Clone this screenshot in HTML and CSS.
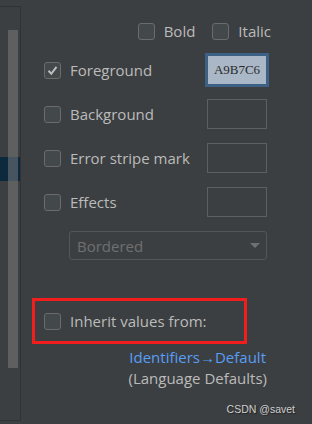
FILE: index.html
```html
<!DOCTYPE html>
<html lang="en">
<head>
  <meta charset="UTF-8" />
  <title>Color Scheme Attributes</title>
  <link rel="stylesheet" href="styles.css">
</head>
<body>
  <div class="tree-panel">
    <div class="tree-selection"></div>
    <div class="scrollbar"></div>
  </div>

  <div class="attributes">
    <div class="font-row">
      <label class="check"><span class="box"></span>Bold</label>
      <label class="check"><span class="box"></span>Italic</label>
    </div>

    <div class="attr-row">
      <label class="check"><span class="box checked"><svg width="13" height="13" viewBox="0 0 13 13"><polyline points="2.5,6.8 5.3,9.8 10.5,2.8" fill="none" stroke="#bdbdbd" stroke-width="2"/></svg></span>Foreground</label>
      <div class="swatch filled">A9B7C6</div>
    </div>
    <div class="attr-row">
      <label class="check"><span class="box"></span>Background</label>
      <div class="swatch"></div>
    </div>
    <div class="attr-row">
      <label class="check"><span class="box"></span>Error stripe mark</label>
      <div class="swatch"></div>
    </div>
    <div class="attr-row">
      <label class="check"><span class="box"></span>Effects</label>
      <div class="swatch"></div>
    </div>

    <div class="effect-select">
      <span>Bordered</span>
      <span class="arrow"></span>
    </div>

    <div class="inherit">
      <label class="check"><span class="box"></span>Inherit values from:</label>
    </div>

    <div class="inherit-link">Identifiers&#8594;Default</div>
    <div class="inherit-note">(Language Defaults)</div>
  </div>

  <div class="watermark">CSDN @savet</div>
</body>
</html>
```

FILE: styles.css
```css
body {
  margin: 0;
  width: 312px;
  height: 424px;
  background-color: #3c3f41;
  color: #bbbbbb;
  font-family: 'Open Sans', 'Noto Sans', sans-serif;
  font-size: 15px;
  display: flex;
  overflow: hidden;
  position: relative;
}
.tree-panel {
  position: relative;
  width: 20px;
  height: 413px;
  margin-top: 6px;
  border-top: 1px solid #323232;
  border-right: 1px solid #323232;
  border-bottom: 1px solid #323232;
  flex-shrink: 0;
}
.tree-selection {
  position: absolute;
  left: 0;
  right: 0;
  top: 150px;
  height: 24px;
  background-color: #0d293e;
}
.scrollbar {
  position: absolute;
  left: 8px;
  width: 10px;
  top: 23px;
  height: 338px;
  background-color: rgba(120, 122, 124, 0.55);
}
.attributes {
  flex: 1;
  padding-left: 23px;
  padding-right: 45px;
  display: flex;
  flex-direction: column;
}
.check {
  display: flex;
  align-items: center;
  gap: 9px;
  white-space: nowrap;
}
.box {
  width: 15px;
  height: 15px;
  border: 1px solid #6b6b6b;
  border-radius: 3px;
  background-color: #43494a;
  display: flex;
  align-items: center;
  justify-content: center;
}
.font-row {
  display: flex;
  justify-content: flex-end;
  gap: 17px;
  height: 20px;
  margin-top: 21px;
  margin-right: -4px;
}
.attr-row {
  display: flex;
  justify-content: space-between;
  align-items: center;
  height: 30px;
  margin-top: 14px;
}
.swatch {
  width: 58px;
  height: 28px;
  border: 1px solid #5e6060;
}
.swatch.filled {
  background-color: #a9b7c6;
  border-color: #3d6185;
  box-shadow: 0 0 0 2px #3d6185;
  color: #2b2b2b;
  font-family: 'Liberation Serif', serif;
  font-size: 13px;
  display: flex;
  align-items: center;
  justify-content: center;
}
.effect-select {
  margin-top: 14px;
  margin-left: 25px;
  height: 27px;
  border: 1px solid #545657;
  border-radius: 3px;
  display: flex;
  align-items: center;
  justify-content: space-between;
  padding: 0 6px 0 7px;
  color: #6e7072;
}
.arrow {
  width: 0;
  height: 0;
  border-left: 5px solid transparent;
  border-right: 5px solid transparent;
  border-top: 5px solid #6e7072;
}
.inherit {
  margin-top: 38px;
  margin-left: -12px;
  width: 200px;
  height: 40px;
  border: 3px solid #f21d1d;
  display: flex;
  align-items: center;
  padding-left: 9px;
}
.inherit-link {
  margin-top: 3px;
  margin-right: 1px;
  align-self: flex-end;
  color: #589df6;
}
.inherit-note {
  align-self: flex-end;
  margin-top: 1px;
}
.watermark {
  position: absolute;
  right: 17px;
  bottom: 9px;
  font-family: 'Liberation Sans', sans-serif;
  font-size: 10.5px;
  color: #cfcfcf;
  text-shadow: 1px 1px 1px #222;
}
```
